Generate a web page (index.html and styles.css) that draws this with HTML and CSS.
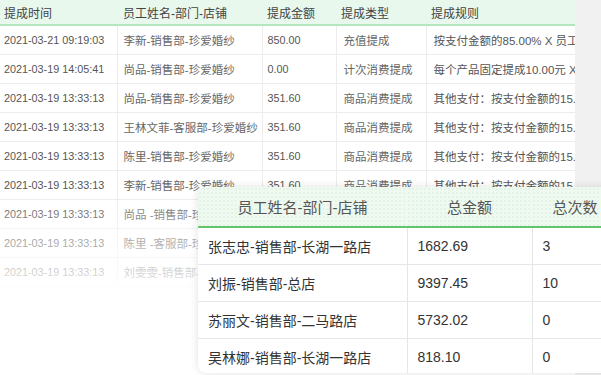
FILE: index.html
```html
<!DOCTYPE html>
<html lang="zh-CN">
<head>
<meta charset="utf-8">
<link rel="stylesheet" href="styles.css">
</head>
<body>
<div class="page">
  <div class="main">
    <table class="bg-table">
      <colgroup>
        <col class="c1"><col class="c2"><col class="c3"><col class="c4"><col class="c5">
      </colgroup>
      <thead>
        <tr><th>提成时间</th><th>员工姓名-部门-店铺</th><th>提成金额</th><th>提成类型</th><th>提成规则</th></tr>
      </thead>
      <tbody>
        <tr><td>2021-03-21 09:19:03</td><td>李新-销售部-珍爱婚纱</td><td>850.00</td><td>充值提成</td><td>按支付金额的85.00% X 员工提成比例</td></tr>
        <tr><td>2021-03-19 14:05:41</td><td>尚品-销售部-珍爱婚纱</td><td>0.00</td><td>计次消费提成</td><td>每个产品固定提成10.00元 X 员工提成比例</td></tr>
        <tr><td>2021-03-19 13:33:13</td><td>尚品-销售部-珍爱婚纱</td><td>351.60</td><td>商品消费提成</td><td>其他支付：按支付金额的15.00%</td></tr>
        <tr><td>2021-03-19 13:33:13</td><td>王林文菲-客服部-珍爱婚纱</td><td>351.60</td><td>商品消费提成</td><td>其他支付：按支付金额的15.00%</td></tr>
        <tr><td>2021-03-19 13:33:13</td><td>陈里-销售部-珍爱婚纱</td><td>351.60</td><td>商品消费提成</td><td>其他支付：按支付金额的15.00%</td></tr>
        <tr><td>2021-03-19 13:33:13</td><td>李新-销售部-珍爱婚纱</td><td>351.60</td><td>商品消费提成</td><td>其他支付：按支付金额的15.00%</td></tr>
        <tr><td>2021-03-19 13:33:13</td><td>尚品 -销售部-珍爱婚纱</td><td>351.60</td><td>商品消费提成</td><td>其他支付：按支付金额的15.00%</td></tr>
        <tr><td>2021-03-19 13:33:13</td><td>陈里 -客服部-珍爱婚纱</td><td>351.60</td><td>商品消费提成</td><td>其他支付：按支付金额的15.00%</td></tr>
        <tr><td>2021-03-19 13:33:13</td><td>刘雯雯-销售部-珍爱婚纱</td><td>351.60</td><td>商品消费提成</td><td>其他支付：按支付金额的15.00%</td></tr>
      </tbody>
    </table>
    <div class="fade"></div>
  </div>
  <div class="side"></div>
</div>

<div class="card">
  <table class="sum-table">
    <colgroup>
      <col class="s1"><col class="s2"><col class="s3">
    </colgroup>
    <thead>
      <tr><th>员工姓名-部门-店铺</th><th>总金额</th><th>总次数</th></tr>
    </thead>
    <tbody>
      <tr><td>张志忠-销售部-长湖一路店</td><td>1682.69</td><td>3</td></tr>
      <tr><td>刘振-销售部-总店</td><td>9397.45</td><td>10</td></tr>
      <tr><td>苏丽文-销售部-二马路店</td><td>5732.02</td><td>0</td></tr>
      <tr><td>吴林娜-销售部-长湖一路店</td><td>818.10</td><td>0</td></tr>
    </tbody>
  </table>
</div>
</body>
</html>
```

FILE: styles.css
```css
html, body {
  margin: 0;
  padding: 0;
}
body {
  width: 601px;
  height: 375px;
  overflow: hidden;
  position: relative;
  background: #fff;
  font-family: "Liberation Sans", "Noto Sans CJK SC", sans-serif;
}
.page {
  display: flex;
  height: 375px;
}
.main {
  width: 575px;
  position: relative;
  overflow: hidden;
  background: #fff;
}
.side {
  flex: 1;
  background: #f1f1f1;
}
.bg-table {
  width: 575px;
  table-layout: fixed;
  border-collapse: collapse;
  font-size: 11.5px;
  color: #555;
}
.c1 { width: 117px; }
.c2 { width: 145px; }
.c3 { width: 74px; }
.c4 { width: 90px; }
.c5 { width: 149px; }
.bg-table th {
  height: 24px;
  padding: 0 0 0 5px;
  text-align: left;
  font-weight: normal;
  font-size: 12px;
  color: #444;
  background: #e9f8ed;
  border-bottom: 2px solid #b3e5c1;
  white-space: nowrap;
  overflow: hidden;
}
.bg-table th:first-child { padding-left: 4px; }
.bg-table th:nth-child(2) { padding-left: 6px; }
.bg-table td {
  height: 28px;
  padding: 0 0 0 5px;
  border-bottom: 1px solid #ececec;
  border-right: 1px solid #ececec;
  white-space: nowrap;
  overflow: hidden;
}
.bg-table td:first-child { padding-left: 4px; font-size: 10.8px; }
.bg-table td:nth-child(2) { padding-left: 6px; color: #666; }
.bg-table td:nth-child(3) { font-size: 10.8px; }
.bg-table td:nth-child(4) { padding-left: 7px; color: #666; }
.bg-table td:nth-child(5) { padding-left: 7px; border-right: none; }
.fade {
  position: absolute;
  left: 0;
  top: 0;
  width: 100%;
  height: 375px;
  background: linear-gradient(to bottom,
    rgba(255,255,255,0) 195px,
    rgba(255,255,255,0.35) 225px,
    rgba(255,255,255,0.7) 270px,
    #fff 300px);
}
.card {
  position: absolute;
  left: 198px;
  top: 187px;
  width: 420px;
  height: 186px;
  background: #fff;
  border-radius: 8px;
  overflow: hidden;
  box-shadow: 0 0 8px rgba(0,0,0,0.12);
}
.sum-table {
  width: 420px;
  table-layout: fixed;
  border-collapse: collapse;
  font-size: 14px;
  color: #333;
}
.s1 { width: 209px; }
.s2 { width: 125px; }
.s3 { width: 86px; }
.sum-table th {
  height: 39px;
  padding: 0;
  font-weight: normal;
  font-size: 15px;
  color: #555;
  text-align: center;
  background-color: #eef9f0;
  background-image: radial-gradient(rgba(120,180,130,0.18) 0.6px, transparent 0.8px);
  background-size: 4px 4px;
  border-bottom: 2px solid #62c46c;
}
.sum-table td {
  height: 36px;
  padding: 0 0 0 10px;
  border-bottom: 1px solid #e6e6e6;
  border-right: 1px solid #e6e6e6;
  white-space: nowrap;
}
.sum-table td:last-child { border-right: none; }
.sum-table tr:last-child td { border-bottom: none; }
```
